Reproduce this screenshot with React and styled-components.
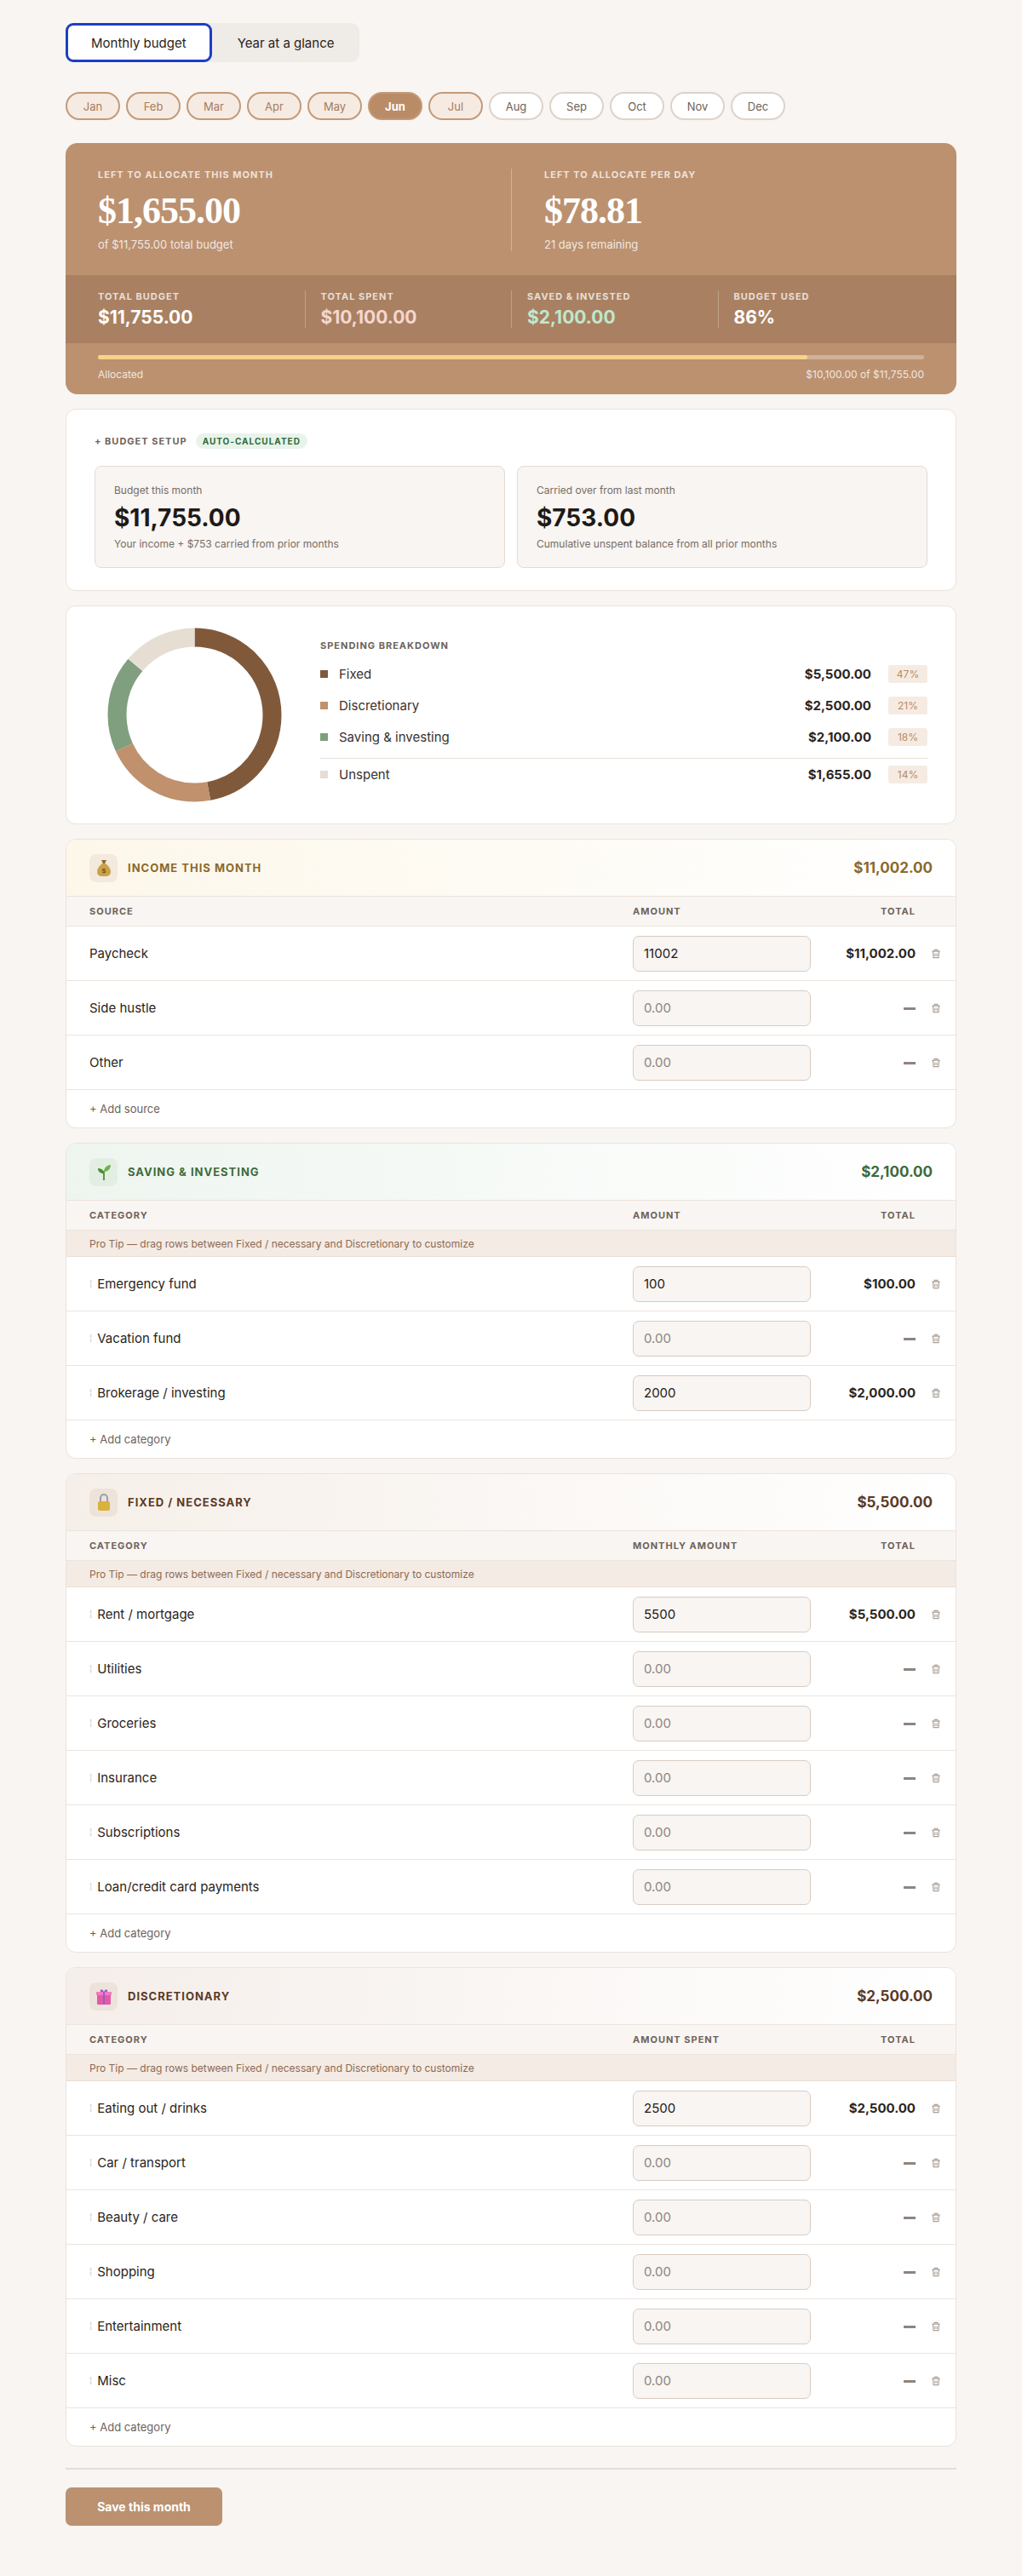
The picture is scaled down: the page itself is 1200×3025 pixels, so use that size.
import React from 'react';
import styled, { createGlobalStyle } from 'styled-components';

const Global = createGlobalStyle`
  body { margin: 0; background: #f8f5f2; font-family: Inter, "Noto Sans", sans-serif; color: #2b2420; }
  * { box-sizing: border-box; }
`;

const Page = styled.div`
  width: 1046px;
  margin: 0 auto;
  padding: 27px 0 70px;
  display: flex;
  flex-direction: column;
  gap: 17px;
`;

const Tabs = styled.div`
  display: inline-flex;
  align-self: flex-start;
  background: #efebe7;
  border-radius: 10px;
`;

const Tab = styled.button`
  font-family: Inter, sans-serif;
  font-size: 15px;
  color: #2b2420;
  padding: 0 27px;
  height: 46px;
  border-radius: 9px;
  border: ${(p) => (p.$active ? '3px solid #1d3fc4' : '3px solid transparent')};
  background: ${(p) => (p.$active ? '#fff' : 'transparent')};
`;

const Months = styled.div`
  display: flex;
  gap: 7px;
  margin: 18px 0 10px;
`;

const Month = styled.div`
  width: 64px;
  height: 33px;
  border-radius: 17px;
  display: flex;
  align-items: center;
  justify-content: center;
  font-size: 13px;
  border: 2px solid ${(p) => (p.$state === 'future' ? '#ddd3cb' : '#c39a78')};
  background: ${(p) => (p.$state === 'active' ? '#b98c67' : p.$state === 'past' ? '#f6ebe3' : '#fff')};
  color: ${(p) => (p.$state === 'active' ? '#fff' : p.$state === 'past' ? '#a77c5c' : '#6d625b')};
  font-weight: ${(p) => (p.$state === 'active' ? 700 : 400)};
`;

const Hero = styled.div`
  background: #bc9170;
  border-radius: 14px;
  overflow: hidden;
  color: #fff;
`;

const HeroTop = styled.div`
  display: grid;
  grid-template-columns: 1fr 1fr;
  padding: 30px 38px 28px;
`;

const HeroCol = styled.div`
  padding-left: ${(p) => (p.$split ? '38px' : '0')};
  border-left: ${(p) => (p.$split ? '1px solid rgba(255,255,255,0.3)' : 'none')};
`;

const Eyebrow = styled.div`
  font-size: 11px;
  font-weight: 700;
  letter-spacing: 1px;
  text-transform: uppercase;
  color: ${(p) => p.$color || 'rgba(255,255,255,0.75)'};
`;

const BigNum = styled.div`
  font-family: "Liberation Serif", "DejaVu Serif", serif;
  font-weight: 700;
  font-size: 44px;
  margin: 10px 0 6px;
  letter-spacing: -1px;
`;

const HeroSub = styled.div`
  font-size: 13px;
  color: rgba(255,255,255,0.8);
`;

const StatRow = styled.div`
  display: grid;
  grid-template-columns: repeat(4, 1fr);
  background: #a98162;
  padding: 18px 38px;
`;

const Stat = styled.div`
  padding-left: ${(p) => (p.$first ? '0' : '18px')};
  border-left: ${(p) => (p.$first ? 'none' : '1px solid rgba(255,255,255,0.25)')};
`;

const StatValue = styled.div`
  font-size: 21px;
  font-weight: 700;
  margin-top: 5px;
  color: ${(p) => p.$color || '#fff'};
`;

const ProgressWrap = styled.div`
  padding: 14px 38px 16px;
`;

const Track = styled.div`
  height: 5px;
  background: rgba(255,255,255,0.3);
  border-radius: 3px;
`;

const Fill = styled.div`
  height: 100%;
  background: #f6d38b;
  border-radius: 3px;
`;

const ProgressLabels = styled.div`
  display: flex;
  justify-content: space-between;
  font-size: 12px;
  color: rgba(255,255,255,0.8);
  margin-top: 10px;
`;

const Card = styled.div`
  background: #fff;
  border: 1px solid #ebe3dc;
  border-radius: 12px;
  overflow: hidden;
`;

const SetupBody = styled.div`
  padding: 28px 33px 26px;
`;

const SetupHead = styled.div`
  display: flex;
  align-items: center;
  gap: 10px;
  font-size: 11px;
  font-weight: 700;
  letter-spacing: 1px;
  color: #6e625a;
`;

const Pill = styled.span`
  background: #e8f4ea;
  color: #2f6a3c;
  border-radius: 10px;
  padding: 3px 8px;
  font-size: 10px;
  letter-spacing: 1px;
`;

const SetupGrid = styled.div`
  display: grid;
  grid-template-columns: 1fr 1fr;
  gap: 14px;
  margin-top: 20px;
`;

const SetupBox = styled.div`
  background: #f8f5f2;
  border: 1px solid #e3dad3;
  border-radius: 8px;
  padding: 20px 22px;
`;

const SmallMuted = styled.div`
  font-size: 12px;
  color: #776c65;
`;

const SetupValue = styled.div`
  font-size: 28px;
  font-weight: 700;
  margin: 8px 0 6px;
  color: #1e1a17;
`;

const DonutBody = styled.div`
  display: flex;
  align-items: center;
  gap: 45px;
  padding: 25px 33px 25px 48px;
  svg { flex-shrink: 0; }
`;

const Legend = styled.div`
  flex: 1;
`;

const LegendRow = styled.div`
  display: flex;
  align-items: center;
  font-size: 15px;
  padding: 8px 0;
  border-top: ${(p) => (p.$split ? '1px solid #e8e0d9' : 'none')};
  margin-top: ${(p) => (p.$split ? '6px' : '0')};
`;

const Swatch = styled.span`
  width: 9px;
  height: 9px;
  background: ${(p) => p.$c};
  margin-right: 13px;
`;

const LegendName = styled.span`
  flex: 1;
  color: #3a322d;
`;

const LegendAmt = styled.span`
  font-weight: 700;
  font-size: 15px;
`;

const Pct = styled.span`
  background: #f6ebe2;
  color: #b98c67;
  font-size: 12px;
  width: 46px;
  text-align: center;
  padding: 3px 0;
  margin-left: 20px;
  border-radius: 3px;
`;

const SectionHead = styled.div`
  display: flex;
  align-items: center;
  height: 67px;
  padding: 0 27px;
  background: ${(p) => p.$bg};
  border-bottom: 1px solid #ece4dd;
`;

const IconBox = styled.div`
  width: 33px;
  height: 33px;
  border-radius: 8px;
  background: ${(p) => p.$bg};
  display: flex;
  align-items: center;
  justify-content: center;
  margin-right: 12px;
`;

const SectionTitle = styled.div`
  flex: 1;
  font-size: 13px;
  font-weight: 700;
  letter-spacing: 1px;
  color: ${(p) => p.$c};
`;

const SectionTotal = styled.div`
  font-size: 17px;
  font-weight: 700;
  color: ${(p) => p.$c};
`;

const Grid = `
  display: grid;
  grid-template-columns: 1fr 209px 123px 47px;
  align-items: center;
  padding: 0 0 0 27px;
`;

const ColHead = styled.div`
  ${Grid}
  height: 35px;
  background: #f8f5f2;
  border-bottom: 1px solid #ece4dd;
  font-size: 11px;
  font-weight: 700;
  letter-spacing: 1px;
  color: #6e625a;
`;

const RightCell = styled.div`
  text-align: right;
`;

const Tip = styled.div`
  height: 31px;
  display: flex;
  align-items: center;
  padding: 0 27px;
  background: #f4ebe4;
  border-bottom: 1px solid #e8ddd3;
  font-size: 12px;
  color: #8c6a52;
`;

const Row = styled.div`
  ${Grid}
  height: 64px;
  border-bottom: 1px solid #ece4dd;
  font-size: 15px;
`;

const RowName = styled.div`
  display: flex;
  align-items: center;
  gap: 6px;
  color: #2b2420;
`;

const Grip = styled.span`
  color: #d6ccc4;
  font-size: 12px;
`;

const Input = styled.div`
  height: 42px;
  border: 1px solid #d8ccc2;
  border-radius: 7px;
  background: #f8f5f2;
  display: flex;
  align-items: center;
  padding: 0 12px;
  font-size: 15px;
  color: ${(p) => (p.$empty ? '#8f857e' : '#1e1a17')};
`;

const Total = styled.div`
  text-align: right;
  font-weight: 700;
  font-size: 15px;
`;

const Dash = styled.span`
  display: inline-block;
  width: 14px;
  height: 3px;
  background: #8f857e;
  vertical-align: middle;
`;

const Trash = styled.div`
  display: flex;
  justify-content: center;
  color: #aaa098;
`;

const AddRow = styled.div`
  height: 44px;
  display: flex;
  align-items: center;
  padding: 0 27px;
  font-size: 13px;
  color: #6e625a;
`;

const Divider = styled.hr`
  border: none;
  border-top: 2px solid #e5ddd6;
  margin: 8px 0 4px;
`;

const SaveBtn = styled.button`
  align-self: flex-start;
  width: 184px;
  height: 45px;
  background: #bc9170;
  color: #fff;
  border: none;
  border-radius: 7px;
  font-family: Inter, sans-serif;
  font-size: 14px;
  font-weight: 700;
`;

const TrashIcon = () => (
  <svg width="14" height="14" viewBox="0 0 24 24" fill="none" stroke="currentColor" strokeWidth="2">
    <path d="M4 7h16M9 7V4h6v3M6 7l1 13h10l1-13M10 11v6M14 11v6" />
  </svg>
);

const icons = {
  bag: (
    <svg width="20" height="22" viewBox="0 0 20 22">
      <path d="M7 2h6l-2 4h-2z" fill="#8a6a2c" />
      <path d="M8 6h4c4 3 6 7 6 10a5 5 0 0 1-5 5H7a5 5 0 0 1-5-5c0-3 2-7 6-10z" fill="#c9a24a" />
      <text x="10" y="17" fontSize="8" textAnchor="middle" fill="#6d5018" fontFamily="Liberation Sans" fontWeight="700">$</text>
    </svg>
  ),
  sprout: (
    <svg width="20" height="22" viewBox="0 0 20 22">
      <path d="M10 21V10" stroke="#5b9a3e" strokeWidth="2" />
      <path d="M10 11C10 6 14 3 18 3c0 5-4 8-8 8z" fill="#6bb24a" />
      <path d="M10 13C10 9 7 7 3 7c0 4 3 6 7 6z" fill="#4f8f35" />
    </svg>
  ),
  lock: (
    <svg width="20" height="22" viewBox="0 0 20 22">
      <path d="M6 10V6a4 4 0 0 1 8 0v4" stroke="#9aa0a6" strokeWidth="2" fill="none" />
      <rect x="3" y="10" width="14" height="11" rx="2" fill="#d9b23c" />
    </svg>
  ),
  gift: (
    <svg width="20" height="22" viewBox="0 0 20 22">
      <rect x="2" y="8" width="16" height="13" rx="1" fill="#e35aa7" />
      <rect x="1" y="6" width="18" height="4" fill="#f07cbf" />
      <rect x="9" y="6" width="2" height="15" fill="#9b59d0" />
      <path d="M10 6C8 2 5 3 6 6zM10 6c2-4 5-3 4 0z" fill="#9b59d0" />
    </svg>
  ),
};

const sections = [
  {
    title: 'INCOME THIS MONTH', total: '$11,002.00', color: '#8a6a2c', bg: 'linear-gradient(90deg,#fdf7ea,#fff)',
    iconBg: '#f3e9dc', icon: 'bag', col1: 'SOURCE', col2: 'AMOUNT', tip: false, add: '+ Add source', grip: false,
    rows: [['Paycheck', '11002', '$11,002.00'], ['Side hustle'], ['Other']],
  },
  {
    title: 'SAVING & INVESTING', total: '$2,100.00', color: '#3d6b3a', bg: 'linear-gradient(90deg,#eef5ef,#fff)',
    iconBg: '#e3eee3', icon: 'sprout', col1: 'CATEGORY', col2: 'AMOUNT', tip: true, add: '+ Add category', grip: true,
    rows: [['Emergency fund', '100', '$100.00'], ['Vacation fund'], ['Brokerage / investing', '2000', '$2,000.00']],
  },
  {
    title: 'FIXED / NECESSARY', total: '$5,500.00', color: '#5a3a26', bg: 'linear-gradient(90deg,#f6efe9,#fff)',
    iconBg: '#ede3da', icon: 'lock', col1: 'CATEGORY', col2: 'MONTHLY AMOUNT', tip: true, add: '+ Add category', grip: true,
    rows: [['Rent / mortgage', '5500', '$5,500.00'], ['Utilities'], ['Groceries'], ['Insurance'], ['Subscriptions'], ['Loan/credit card payments']],
  },
  {
    title: 'DISCRETIONARY', total: '$2,500.00', color: '#5a3a26', bg: 'linear-gradient(90deg,#f5eeea,#fff)',
    iconBg: '#ede3da', icon: 'gift', col1: 'CATEGORY', col2: 'AMOUNT SPENT', tip: true, add: '+ Add category', grip: true,
    rows: [['Eating out / drinks', '2500', '$2,500.00'], ['Car / transport'], ['Beauty / care'], ['Shopping'], ['Entertainment'], ['Misc']],
  },
];

const segments = [
  { name: 'Fixed', amt: '$5,500.00', pct: 47, c: '#80593b' },
  { name: 'Discretionary', amt: '$2,500.00', pct: 21, c: '#c0916c' },
  { name: 'Saving & investing', amt: '$2,100.00', pct: 18, c: '#7f9f7e' },
  { name: 'Unspent', amt: '$1,655.00', pct: 14, c: '#e6ddd3' },
];

const Donut = () => {
  const r = 91;
  const circ = 2 * Math.PI * r;
  let offset = 0;
  return (
    <svg width="205" height="205" viewBox="0 0 205 205">
      <g transform="rotate(-90 102.5 102.5)">
        {segments.map((s) => {
          const len = (s.pct / 100) * circ;
          const el = (
            <circle key={s.name} cx="102.5" cy="102.5" r={r} fill="none" stroke={s.c} strokeWidth="22"
              strokeDasharray={`${len} ${circ - len}`} strokeDashoffset={-offset} />
          );
          offset += len;
          return el;
        })}
      </g>
    </svg>
  );
};

const months = ['Jan', 'Feb', 'Mar', 'Apr', 'May', 'Jun', 'Jul', 'Aug', 'Sep', 'Oct', 'Nov', 'Dec'];

const Section = ({ s }) => (
  <Card>
    <SectionHead $bg={s.bg}>
      <IconBox $bg={s.iconBg}>{icons[s.icon]}</IconBox>
      <SectionTitle $c={s.color}>{s.title}</SectionTitle>
      <SectionTotal $c={s.color}>{s.total}</SectionTotal>
    </SectionHead>
    <ColHead>
      <div>{s.col1}</div>
      <div>{s.col2}</div>
      <RightCell>TOTAL</RightCell>
      <div />
    </ColHead>
    {s.tip && <Tip>Pro Tip — drag rows between Fixed / necessary and Discretionary to customize</Tip>}
    {s.rows.map(([name, val, tot]) => (
      <Row key={name}>
        <RowName>{s.grip && <Grip>⁞</Grip>}{name}</RowName>
        <Input $empty={!val}>{val || '0.00'}</Input>
        <Total>{tot || <Dash />}</Total>
        <Trash><TrashIcon /></Trash>
      </Row>
    ))}
    <AddRow>{s.add}</AddRow>
  </Card>
);

export default function App() {
  return (
    <>
      <Global />
      <Page>
        <Tabs>
          <Tab $active>Monthly budget</Tab>
          <Tab>Year at a glance</Tab>
        </Tabs>
        <Months>
          {months.map((m, i) => (
            <Month key={m} $state={i === 5 ? 'active' : i < 7 ? 'past' : 'future'}>{m}</Month>
          ))}
        </Months>

        <Hero>
          <HeroTop>
            <HeroCol>
              <Eyebrow>Left to allocate this month</Eyebrow>
              <BigNum>$1,655.00</BigNum>
              <HeroSub>of $11,755.00 total budget</HeroSub>
            </HeroCol>
            <HeroCol $split>
              <Eyebrow>Left to allocate per day</Eyebrow>
              <BigNum>$78.81</BigNum>
              <HeroSub>21 days remaining</HeroSub>
            </HeroCol>
          </HeroTop>
          <StatRow>
            <Stat $first><Eyebrow>Total budget</Eyebrow><StatValue>$11,755.00</StatValue></Stat>
            <Stat><Eyebrow>Total spent</Eyebrow><StatValue $color="#f6d6cf">$10,100.00</StatValue></Stat>
            <Stat><Eyebrow>Saved &amp; invested</Eyebrow><StatValue $color="#bfe8cd">$2,100.00</StatValue></Stat>
            <Stat><Eyebrow>Budget used</Eyebrow><StatValue>86%</StatValue></Stat>
          </StatRow>
          <ProgressWrap>
            <Track><Fill style={{ width: `${(10100 / 11755) * 100}%` }} /></Track>
            <ProgressLabels><span>Allocated</span><span>$10,100.00 of $11,755.00</span></ProgressLabels>
          </ProgressWrap>
        </Hero>

        <Card>
          <SetupBody>
            <SetupHead>+ BUDGET SETUP <Pill>AUTO-CALCULATED</Pill></SetupHead>
            <SetupGrid>
              <SetupBox>
                <SmallMuted>Budget this month</SmallMuted>
                <SetupValue>$11,755.00</SetupValue>
                <SmallMuted>Your income + $753 carried from prior months</SmallMuted>
              </SetupBox>
              <SetupBox>
                <SmallMuted>Carried over from last month</SmallMuted>
                <SetupValue>$753.00</SetupValue>
                <SmallMuted>Cumulative unspent balance from all prior months</SmallMuted>
              </SetupBox>
            </SetupGrid>
          </SetupBody>
        </Card>

        <Card>
          <DonutBody>
            <Donut />
            <Legend>
              <SetupHead style={{ marginBottom: 8 }}>SPENDING BREAKDOWN</SetupHead>
              {segments.map((s, i) => (
                <LegendRow key={s.name} $split={i === 3}>
                  <Swatch $c={s.c} />
                  <LegendName>{s.name}</LegendName>
                  <LegendAmt>{s.amt}</LegendAmt>
                  <Pct>{s.pct}%</Pct>
                </LegendRow>
              ))}
            </Legend>
          </DonutBody>
        </Card>

        {sections.map((s) => <Section key={s.title} s={s} />)}

        <Divider />
        <SaveBtn>Save this month</SaveBtn>
      </Page>
    </>
  );
}
